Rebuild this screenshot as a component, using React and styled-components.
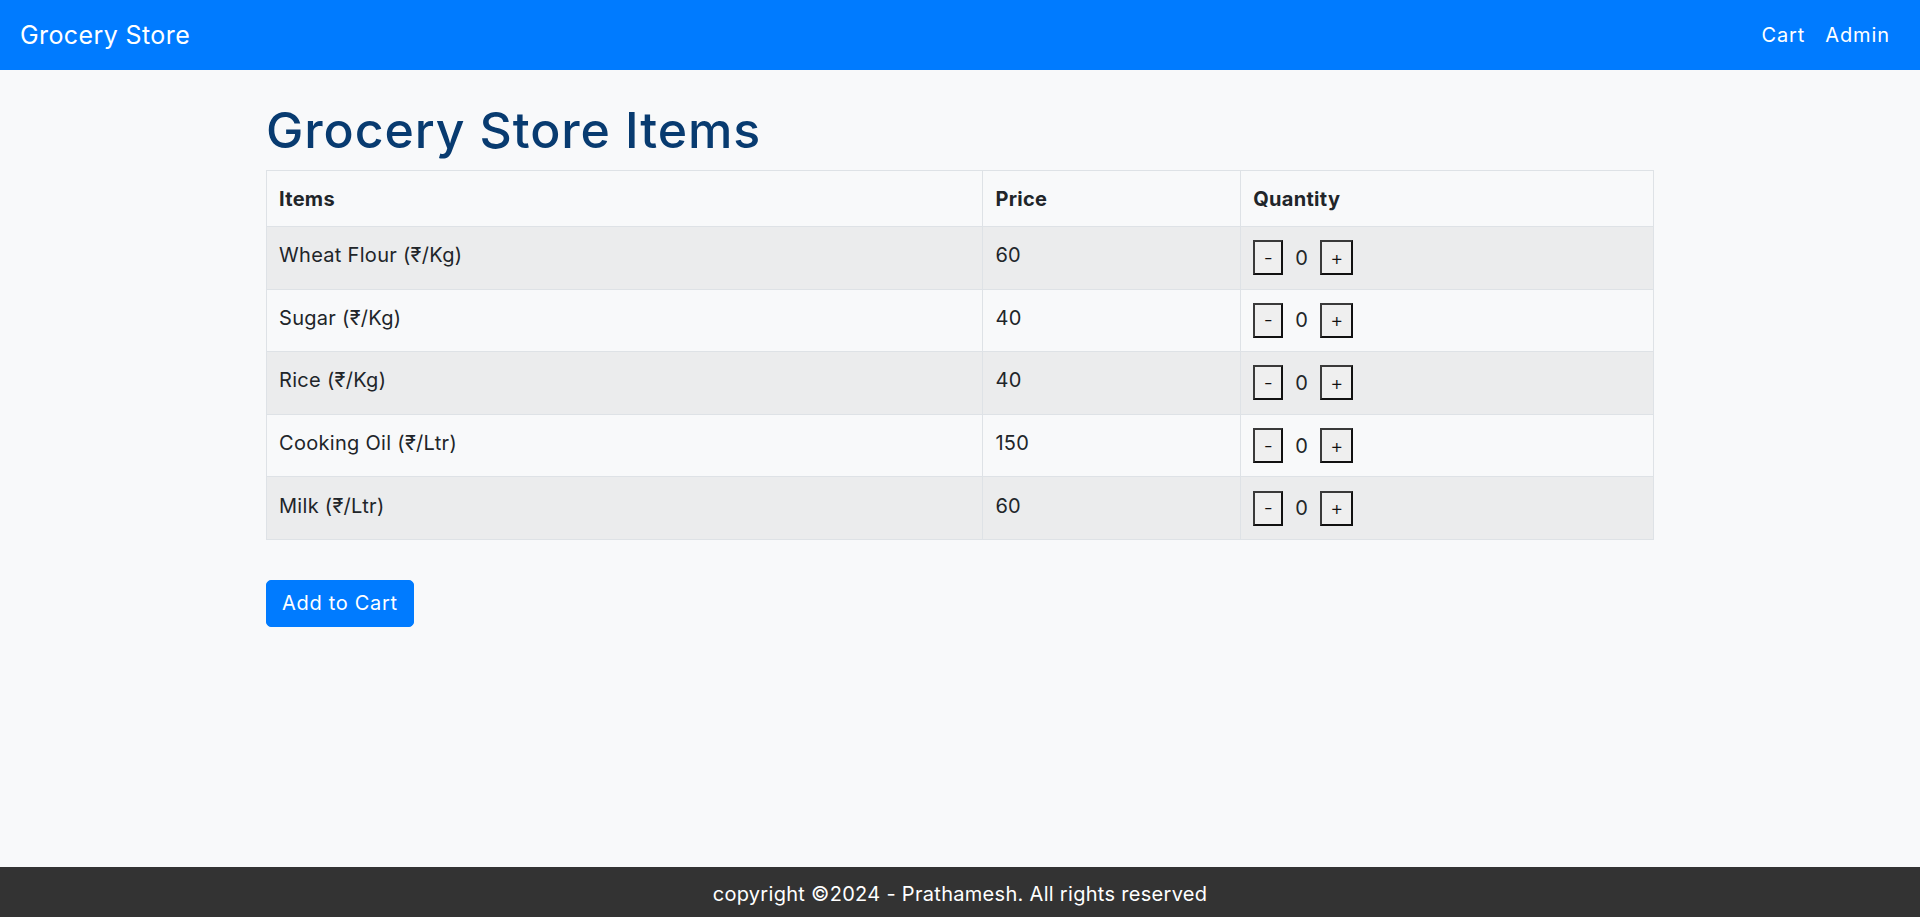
import React, { useState } from "react";
import styled, { createGlobalStyle } from "styled-components";

const GlobalStyle = createGlobalStyle`
  * {
    box-sizing: border-box;
  }
  body {
    margin: 0;
    background: #f8f9fa;
    font-family: "Inter", "Noto Sans", sans-serif;
    color: #212529;
  }
`;

const Page = styled.div`
  min-height: 100vh;
  display: flex;
  flex-direction: column;
`;

const Navbar = styled.nav`
  height: 70px;
  background: #007bff;
  display: flex;
  align-items: center;
  justify-content: space-between;
  padding: 0 20px;
`;

const Brand = styled.a`
  color: #fff;
  font-size: 25px;
  letter-spacing: 0.4px;
  text-decoration: none;
`;

const NavLinks = styled.div`
  display: flex;
`;

const NavLink = styled.a`
  color: #fff;
  font-size: 20px;
  letter-spacing: 0.9px;
  padding: 0 10px;
  text-decoration: none;
`;

const Main = styled.main`
  flex: 1;
  width: 1388px;
  margin: 0 auto;
  padding-top: 30px;
`;

const Title = styled.h1`
  margin: 0 0 10px;
  font-size: 50px;
  font-weight: 500;
  line-height: 60px;
  color: #083b70;
  letter-spacing: 0.9px;
`;

const Table = styled.table`
  width: 100%;
  border-collapse: collapse;
  font-size: 20px;
  letter-spacing: 0.3px;
  margin-bottom: 40px;
`;

const HeadCell = styled.th`
  text-align: left;
  font-weight: 700;
  height: 56px;
  padding: 0 12px;
  line-height: 30px;
  border: 1px solid #dee2e6;
  width: ${(p) => p.$width}px;
`;

const Row = styled.tr`
  height: 62.6px;
  background: ${(p) => (p.$striped ? "#ebeced" : "transparent")};
`;

const Cell = styled.td`
  padding: 0 12px ${(p) => (p.$raised ? "5px" : "0")};
  line-height: 30px;
  border: 1px solid #dee2e6;
  vertical-align: middle;
`;

const Qty = styled.div`
  display: flex;
  align-items: center;
`;

const QtyButton = styled.button`
  height: 35px;
  width: ${(p) => p.$width}px;
  padding: 0;
  border: 2px solid #3a3a3a;
  border-right-color: #111;
  border-bottom-color: #111;
  border-radius: 0;
  background: #efefef;
  font-family: "Inter", "Noto Sans", sans-serif;
  font-size: 20px;
  font-weight: 300;
  color: #111;
`;

const Count = styled.span`
  margin: 0 12px;
  font-size: 20px;
`;

const CartButton = styled.button`
  height: 47px;
  padding: 0 15px;
  border: 1px solid #007bff;
  border-radius: 5px;
  background: #007bff;
  color: #fff;
  font-family: "Inter", "Noto Sans", sans-serif;
  font-size: 20px;
  letter-spacing: 0.7px;
`;

const Footer = styled.footer`
  height: 50px;
  background: #333;
  color: #fff;
  font-size: 20px;
  letter-spacing: 0.3px;
  display: flex;
  align-items: center;
  justify-content: center;
  padding-top: 3px;
`;

const items = [
  { name: "Wheat Flour (₹/Kg)", price: 60 },
  { name: "Sugar (₹/Kg)", price: 40 },
  { name: "Rice (₹/Kg)", price: 40 },
  { name: "Cooking Oil (₹/Ltr)", price: 150 },
  { name: "Milk (₹/Ltr)", price: 60 },
];

const App = () => {
  const [counts, setCounts] = useState(items.map(() => 0));

  const change = (index, delta) => {
    setCounts((prev) =>
      prev.map((c, i) => (i === index ? Math.max(0, c + delta) : c))
    );
  };

  return (
    <Page>
      <GlobalStyle />
      <Navbar>
        <Brand href="#">Grocery Store</Brand>
        <NavLinks>
          <NavLink href="#">Cart</NavLink>
          <NavLink href="#">Admin</NavLink>
        </NavLinks>
      </Navbar>
      <Main>
        <Title>Grocery Store Items</Title>
        <Table>
          <thead>
            <tr>
              <HeadCell $width={717}>Items</HeadCell>
              <HeadCell $width={258}>Price</HeadCell>
              <HeadCell $width={413}>Quantity</HeadCell>
            </tr>
          </thead>
          <tbody>
            {items.map((item, i) => (
              <Row key={item.name} $striped={i % 2 === 0}>
                <Cell $raised>{item.name}</Cell>
                <Cell $raised>{item.price}</Cell>
                <Cell>
                  <Qty>
                    <QtyButton $width={30} onClick={() => change(i, -1)}>
                      -
                    </QtyButton>
                    <Count>{counts[i]}</Count>
                    <QtyButton $width={33} onClick={() => change(i, 1)}>
                      +
                    </QtyButton>
                  </Qty>
                </Cell>
              </Row>
            ))}
          </tbody>
        </Table>
        <CartButton>Add to Cart</CartButton>
      </Main>
      <Footer>copyright ©2024 - Prathamesh. All rights reserved</Footer>
    </Page>
  );
};

export default App;
